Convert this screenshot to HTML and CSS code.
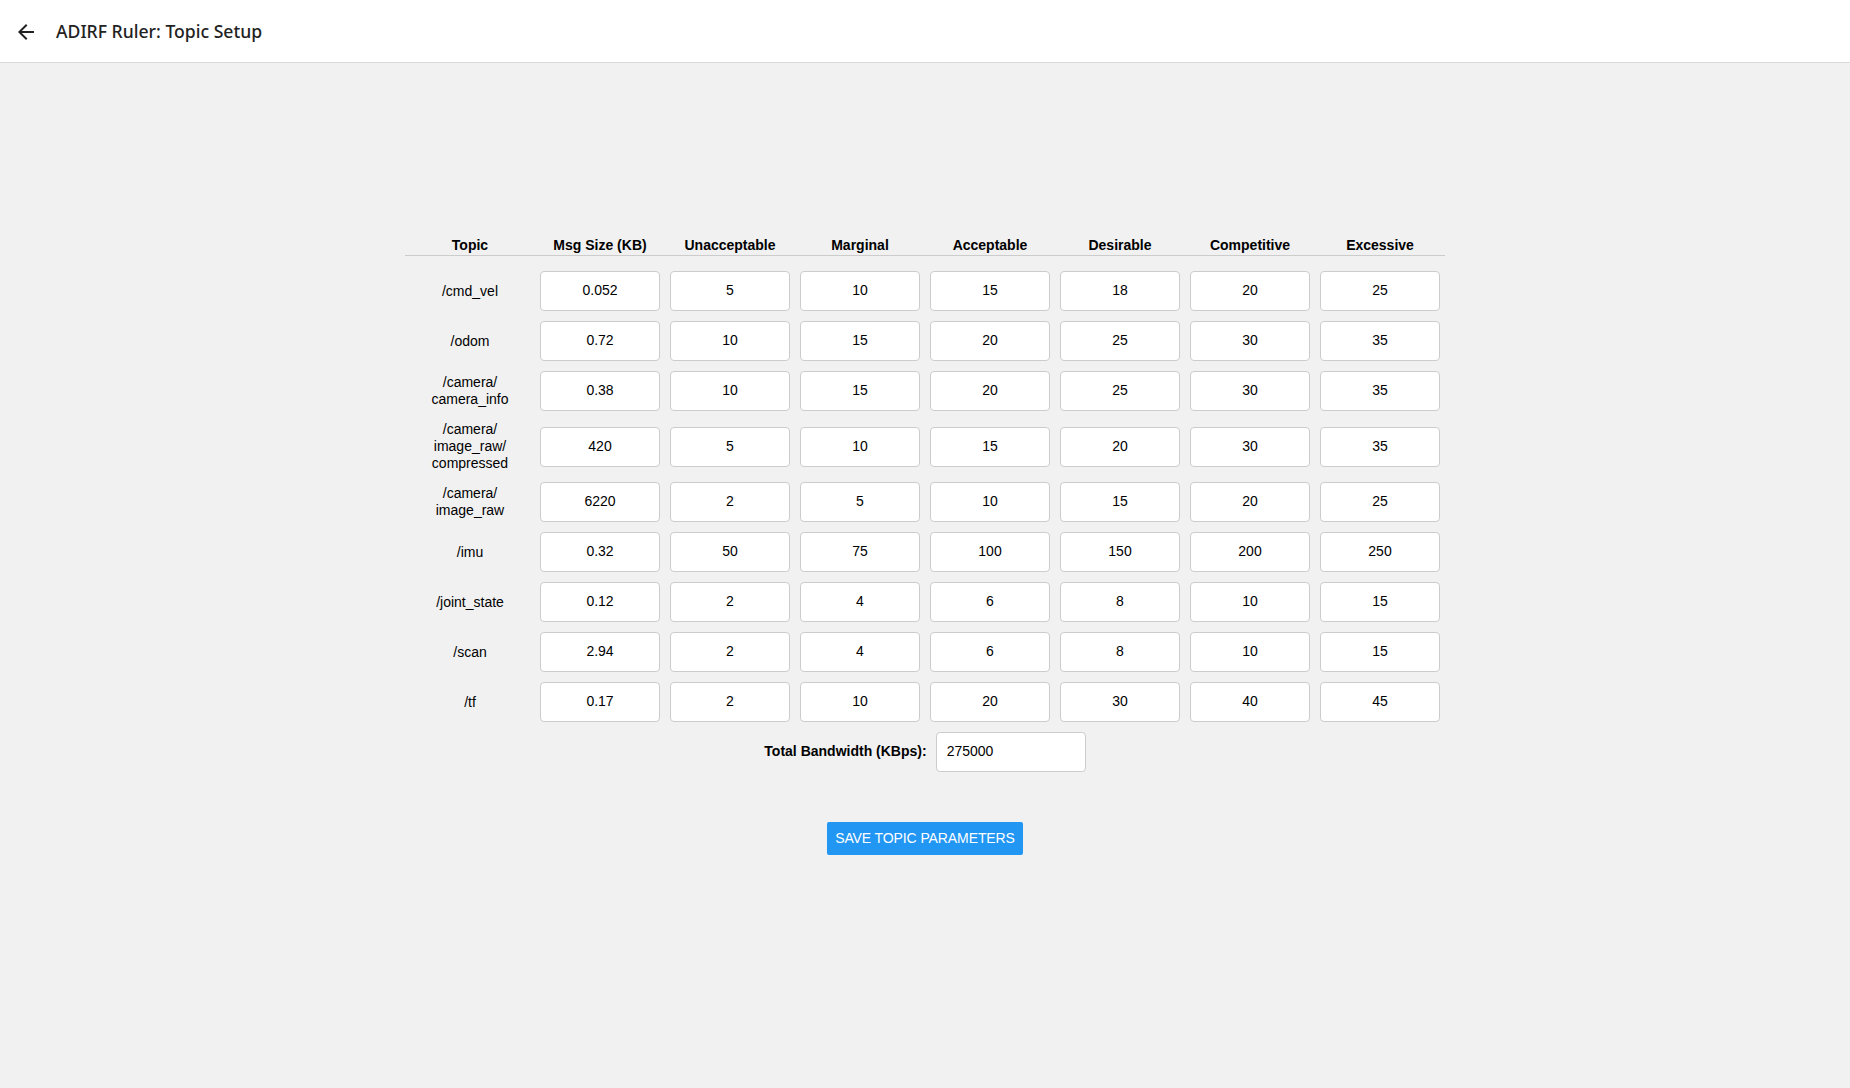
FILE: index.html
```html
<!DOCTYPE html>
<html>
<head>
<meta charset="utf-8">
<title>ADIRF Ruler: Topic Setup</title>
<link rel="stylesheet" href="styles.css">
</head>
<body>
<header class="app-bar">
  <button class="back-btn" aria-label="Back">
    <svg width="24" height="24" viewBox="0 0 24 24"><path d="M20 11H7.83l5.59-5.59L12 4l-8 8 8 8 1.41-1.41L7.83 13H20v-2z" fill="#222"/></svg>
  </button>
  <h1 class="title">ADIRF Ruler: Topic Setup</h1>
</header>
<main class="content">
  <table class="topics">
    <colgroup>
      <col><col><col><col><col><col><col><col>
    </colgroup>
    <thead>
      <tr>
        <th>Topic</th><th>Msg Size (KB)</th><th>Unacceptable</th><th>Marginal</th><th>Acceptable</th><th>Desirable</th><th>Competitive</th><th>Excessive</th>
      </tr>
    </thead>
    <tbody>
      <tr><td class="topic">/cmd_vel</td><td><input value="0.052"></td><td><input value="5"></td><td><input value="10"></td><td><input value="15"></td><td><input value="18"></td><td><input value="20"></td><td><input value="25"></td></tr>
      <tr><td class="topic">/odom</td><td><input value="0.72"></td><td><input value="10"></td><td><input value="15"></td><td><input value="20"></td><td><input value="25"></td><td><input value="30"></td><td><input value="35"></td></tr>
      <tr><td class="topic">/camera/<br>camera_info</td><td><input value="0.38"></td><td><input value="10"></td><td><input value="15"></td><td><input value="20"></td><td><input value="25"></td><td><input value="30"></td><td><input value="35"></td></tr>
      <tr><td class="topic">/camera/<br>image_raw/<br>compressed</td><td><input value="420"></td><td><input value="5"></td><td><input value="10"></td><td><input value="15"></td><td><input value="20"></td><td><input value="30"></td><td><input value="35"></td></tr>
      <tr><td class="topic">/camera/<br>image_raw</td><td><input value="6220"></td><td><input value="2"></td><td><input value="5"></td><td><input value="10"></td><td><input value="15"></td><td><input value="20"></td><td><input value="25"></td></tr>
      <tr><td class="topic">/imu</td><td><input value="0.32"></td><td><input value="50"></td><td><input value="75"></td><td><input value="100"></td><td><input value="150"></td><td><input value="200"></td><td><input value="250"></td></tr>
      <tr><td class="topic">/joint_state</td><td><input value="0.12"></td><td><input value="2"></td><td><input value="4"></td><td><input value="6"></td><td><input value="8"></td><td><input value="10"></td><td><input value="15"></td></tr>
      <tr><td class="topic">/scan</td><td><input value="2.94"></td><td><input value="2"></td><td><input value="4"></td><td><input value="6"></td><td><input value="8"></td><td><input value="10"></td><td><input value="15"></td></tr>
      <tr><td class="topic">/tf</td><td><input value="0.17"></td><td><input value="2"></td><td><input value="10"></td><td><input value="20"></td><td><input value="30"></td><td><input value="40"></td><td><input value="45"></td></tr>
    </tbody>
  </table>
  <div class="total">
    <label class="total-label">Total Bandwidth (KBps):</label>
    <input class="total-input" value="275000">
  </div>
  <div class="actions">
    <button class="save-btn">SAVE TOPIC PARAMETERS</button>
  </div>
</main>
</body>
</html>
```
FILE: styles.css
```css
html, body {
  margin: 0;
  padding: 0;
  background: #f1f1f1;
  font-family: "Liberation Sans", Arial, sans-serif;
  color: #000;
}

.app-bar {
  height: 62px;
  background: #fff;
  border-bottom: 1px solid #d9d9d9;
  display: flex;
  align-items: center;
  padding-left: 14px;
  box-sizing: content-box;
}

.back-btn {
  width: 24px;
  height: 24px;
  padding: 0;
  margin: 1px 0 0 0;
  border: none;
  background: none;
  display: flex;
  align-items: center;
  justify-content: center;
}

.title {
  margin: 0 0 0 18px;
  font-family: "Noto Sans", "Open Sans", sans-serif;
  font-weight: 500;
  font-size: 17.6px;
  color: #222;
  letter-spacing: 0;
}

.content {
  padding-top: 169px;
  display: flex;
  flex-direction: column;
  align-items: center;
}

.topics {
  width: 1040px;
  table-layout: fixed;
  border-collapse: collapse;
}

.topics col {
  width: 130px;
}

.topics th {
  font-size: 14px;
  font-weight: bold;
  line-height: 17px;
  padding: 5px 5px 1px;
  text-align: center;
  border-bottom: 1px solid #cccccc;
}

.topics td {
  padding: 5px;
  text-align: center;
  vertical-align: middle;
  font-size: 14px;
  line-height: 17px;
}

.topics tbody tr:first-child td {
  padding-top: 15px;
}

.topics input {
  display: block;
  width: 120px;
  height: 40px;
  box-sizing: border-box;
  border: 1px solid #cccccc;
  border-radius: 4px;
  background: #fff;
  text-align: center;
  font-family: "Liberation Sans", Arial, sans-serif;
  font-size: 14px;
  color: #000;
  padding: 0 0 2px;
}

.total {
  margin-top: 5px;
  display: flex;
  align-items: center;
  gap: 9px;
}

.total-label {
  font-size: 14px;
  font-weight: bold;
  padding-bottom: 2px;
}

.total-input {
  width: 150px;
  height: 40px;
  box-sizing: border-box;
  border: 1px solid #cccccc;
  border-radius: 4px;
  background: #fff;
  padding: 0 10px 2px;
  font-family: "Liberation Sans", Arial, sans-serif;
  font-size: 14px;
  color: #000;
}

.actions {
  margin-top: 50px;
}

.save-btn {
  height: 33px;
  width: 196px;
  padding: 0 0 2px;
  border: none;
  border-radius: 2px;
  background: #2196f3;
  color: #fff;
  font-family: "Liberation Sans", Arial, sans-serif;
  font-size: 14px;
  letter-spacing: -0.1px;
}
```
